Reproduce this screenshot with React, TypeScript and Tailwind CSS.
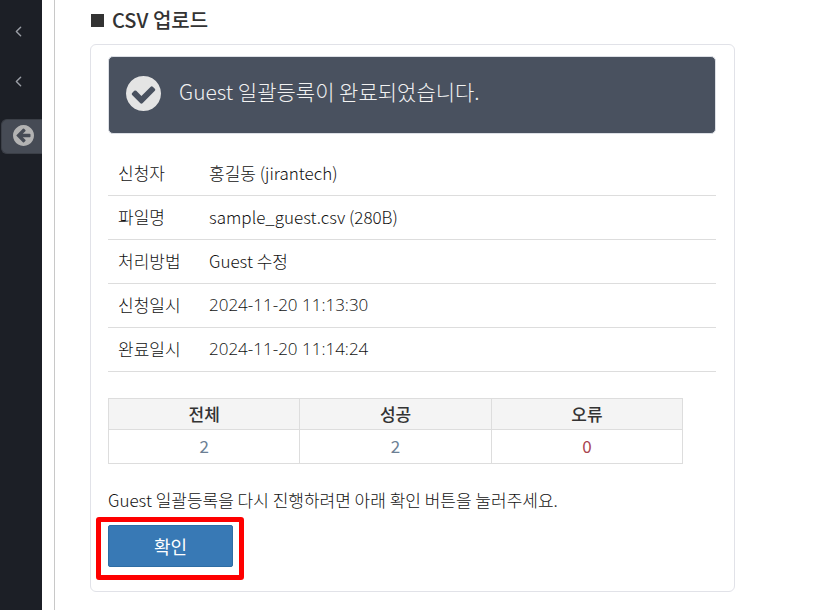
import { ChevronLeft } from "lucide-react";

const details = [
  { label: "신청자", value: "홍길동 (jirantech)" },
  { label: "파일명", value: "sample_guest.csv (280B)" },
  { label: "처리방법", value: "Guest 수정" },
  { label: "신청일시", value: "2024-11-20 11:13:30", isDate: true },
  { label: "완료일시", value: "2024-11-20 11:14:24", isDate: true },
];

function CheckCircleIcon() {
  return (
    <svg viewBox="0 0 1536 1536" className="size-[35px] shrink-0" fill="currentColor" aria-hidden="true">
      <path d="M1284 606q0-28-18-46l-91-90q-19-19-45-19t-45 19l-408 407-226-226q-19-19-45-19t-45 19l-91 90q-18 18-18 46 0 27 18 45l362 362q19 19 45 19 27 0 46-19l543-543q18-18 18-45zM1536 768q0 209-103 385.5t-279.5 279.5-385.5 103-385.5-103-279.5-279.5-103-385.5 103-385.5 279.5-279.5 385.5-103 385.5 103 279.5 279.5 103 385.5z" />
    </svg>
  );
}

function ArrowCircleLeftIcon() {
  return (
    <svg viewBox="128 128 1536 1536" className="size-[21px]" fill="currentColor" aria-hidden="true">
      <path d="M1408 960v-128q0-26-19-45t-45-19h-502l189-189q19-19 19-45t-19-45l-91-91q-18-18-45-18t-45 18l-362 362-91 91q-18 18-18 45t18 45l91 91 362 362q18 18 45 18t45-18l91-91q18-18 18-45t-18-45l-189-189h502q26 0 45-19t19-45zm256-64q0 209-103 385.5t-279.5 279.5-385.5 103-385.5-103-279.5-279.5-103-385.5 103-385.5 279.5-279.5 385.5-103 385.5 103 279.5 279.5 103 385.5z" />
    </svg>
  );
}

function Sidebar() {
  return (
    <nav className="flex w-[42px] shrink-0 flex-col bg-[#1c1f26] pt-[6px] text-[#9a9ea5]">
      <button aria-label="메뉴 열기" className="flex h-[50px] items-center pl-[10px]">
        <ChevronLeft size={17} strokeWidth={2} />
      </button>
      <button aria-label="메뉴 열기" className="flex h-[50px] items-center pl-[10px]">
        <ChevronLeft size={17} strokeWidth={2} />
      </button>
      <button aria-label="메뉴 접기" className="mt-[13px] ml-px flex h-[35px] items-center rounded-l-md border border-r-0 border-[#3b3f47] bg-[#464b55] pb-[2px] pl-[11px] text-[#b3b3b3]">
        <ArrowCircleLeftIcon />
      </button>
    </nav>
  );
}

export default function App() {
  return (
    <div className="flex min-h-screen bg-white font-['Noto_Sans_CJK_KR',sans-serif] text-[#333]">
      <Sidebar />
      <main className="ml-3 grow border-l border-[#c8c8c8] pt-[6px] pr-[82px] pb-[18px] pl-[35px]">
        <h1 className="flex items-center gap-2 pl-px text-[20px] leading-7 font-medium">
          <span className="size-[13px] bg-[#333]" />
          CSV 업로드
        </h1>

        <section className="mt-[10px] rounded-md border border-[#e1e2e8] pt-[11px] pr-[18px] pb-6 pl-[17px]">
          {/* Result banner */}
          <div className="flex h-[78px] items-center gap-[18px] rounded-[5px] border border-[#dcdfe5] bg-[#49515f] pl-[17px] pb-1 text-[#e4e4e4]">
            <CheckCircleIcon />
            <p className="pb-1 text-[21px] leading-8 font-light text-[#f2f2f2]">Guest 일괄등록이 완료되었습니다.</p>
          </div>

          <table className="mt-[17px] w-full text-left text-[17px] leading-6 text-[#111]">
            <tbody>
              {details.map((row) => (
                <tr key={row.label} className="h-[44px] border-b border-[#ddd]">
                  <th scope="row" className="w-[91px] pl-[10px] font-light">{row.label}</th>
                  <td className={row.isDate ? "pl-[10px] font-['Open_Sans',sans-serif] font-light" : "pl-[10px] font-light"}>
                    {row.value}
                  </td>
                </tr>
              ))}
            </tbody>
          </table>

          {/* Counts */}
          <table className="mt-[26px] w-[94.6%] table-fixed border-collapse text-center text-[17px] leading-6">
            <thead>
              <tr className="h-[31px] bg-[#f4f4f4]">
                <th className="border border-[#ddd] font-medium">전체</th>
                <th className="border border-[#ddd] font-medium">성공</th>
                <th className="border border-[#ddd] font-medium">오류</th>
              </tr>
            </thead>
            <tbody>
              <tr className="h-[34px]">
                <td className="border border-[#ddd] text-[#6c7f94]">2</td>
                <td className="border border-[#ddd] text-[#6c7f94]">2</td>
                <td className="border border-[#ddd] text-[#a94450]">0</td>
              </tr>
            </tbody>
          </table>

          <p className="mt-6 text-[17px] leading-6 font-light text-[#111]">
            Guest 일괄등록을 다시 진행하려면 아래 확인 버튼을 눌러주세요.
          </p>
          <div className="relative mt-[13px] w-fit">
            <button className="h-[42px] w-[125px] rounded-[2px] border border-[#2e6da4] bg-[#3879b5] text-[18px] leading-6 text-white">
              확인
            </button>
            {/* Highlight around the confirm button */}
            <div className="pointer-events-none absolute -top-2 -right-[11px] -bottom-[13px] -left-3 rounded-[3px] border-5 border-[#fe0000]" />
          </div>
        </section>
      </main>
    </div>
  );
}
